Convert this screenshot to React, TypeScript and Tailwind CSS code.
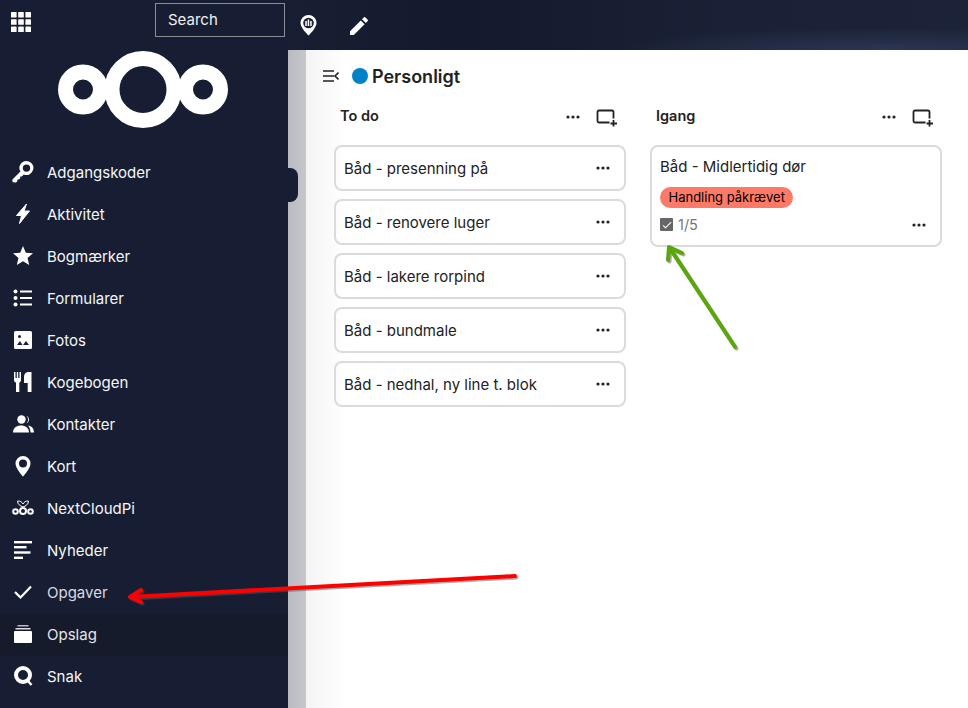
import React from "react";
import { MdStar, MdCheck } from "react-icons/md";

const Dots = () => (
  <svg width="14" height="4" viewBox="0 0 14 4" fill="#222">
    <circle cx="2" cy="2" r="1.6" /><circle cx="7" cy="2" r="1.6" /><circle cx="12" cy="2" r="1.6" />
  </svg>
);

const AddCard = () => (
  <svg width="22" height="18" viewBox="0 0 22 18" fill="none" stroke="#222" strokeWidth="1.8">
    <path d="M17.500 9.500V3a1.500 1.500 0 0 0-1.500-1.500H3A1.500 1.500 0 0 0 1.500 3v9A1.500 1.500 0 0 0 3 13.500h10.500" />
    <path d="M17.500 11v6.500M14.500 14.500h6.500" />
  </svg>
);

const Key = () => (
  <svg width="22" height="22" viewBox="0 0 22 22" fill="#fff">
    <path fillRule="evenodd" d="M14.500 0a7 7 0 1 1-2.700 13.500L9.800 15.500H8.200v1.700l-1.300 1.300H5.300v1.700L4 21.500l-3.300-.2-.5-2.600 8.200-8.100A7 7 0 0 1 14.500 0Zm0 3.400a3.700 3.700 0 1 0 0 7.400 3.700 3.700 0 0 0 0-7.400Z" />
  </svg>
);

const Bolt = () => (
  <svg width="16" height="22" viewBox="0 0 16 22" fill="#fff" stroke="#fff" strokeWidth="1" strokeLinejoin="round">
    <path d="M11.500 1 1.500 12.500h5L4.500 20.500 14.500 8h-5.500L11.500 1Z" />
  </svg>
);

const Bullets = () => (
  <svg width="20" height="18" viewBox="0 0 20 18" fill="#fff">
    <circle cx="2.500" cy="2.500" r="2" /><circle cx="2.500" cy="9" r="2" /><circle cx="2.500" cy="15.500" r="2" />
    <rect x="7" y="1.500" width="12" height="2" /><rect x="7" y="8" width="12" height="2" /><rect x="7" y="14.500" width="12" height="2" />
  </svg>
);

const Photo = () => (
  <svg width="18" height="18" viewBox="0 0 18 18">
    <rect width="18" height="18" rx="1.500" fill="#fff" />
    <circle cx="5.500" cy="5.500" r="1.500" fill="#171e33" />
    <path d="M3 14 6 10l2.500 4H3ZM9 14l3-4 3 4H9Z" fill="#171e33" />
  </svg>
);

const Cutlery = () => (
  <svg width="18" height="20" viewBox="0 0 18 20" fill="#fff">
    <path d="M0 0h1.500v6h1.300V0h1.400v6h1.300V0H7v8c0 1.300-.6 2.200-1.700 2.500V20H2V10.500C.7 10.200 0 9.300 0 8V0Z" />
    <path d="M10 5c0-3 1.500-4.700 4-5h3.500v20h-3.800v-9H10V5Z" />
  </svg>
);

const People = () => (
  <svg width="21" height="18" viewBox="0 0 21 18" fill="#fff">
    <circle cx="8.500" cy="4.500" r="4.200" />
    <path d="M0 17.500c0-4.500 3.500-7 8-7s8 2.500 8 7H0Z" />
    <path d="M13.500.7a4.200 4.200 0 0 1 0 7.700A6 6 0 0 0 13.500.7ZM15 10.500c3.500.4 6 2.700 6 7h-3.500c0-3-1-5.200-2.500-7Z" />
  </svg>
);

const Pin = () => (
  <svg width="16" height="21" viewBox="0 0 16 21" fill="#fff">
    <path fillRule="evenodd" d="M8 0a7.500 7.500 0 0 0-7.500 7.500C.5 12.500 8 20.500 8 20.500s7.500-8 7.500-13A7.500 7.500 0 0 0 8 0Zm0 3.500a4 4 0 1 1 0 8 4 4 0 0 1 0-8Z" />
  </svg>
);

const MapsPin = () => (
  <svg width="17" height="21" viewBox="0 0 17 21">
    <path d="M8.500 0A8 8 0 0 0 .5 8c0 5 8 12.500 8 12.500s8-7.500 8-12.500a8 8 0 0 0-8-8Z" fill="#fff" />
    <circle cx="8.500" cy="8" r="5.300" fill="#1a2136" />
    <rect x="5.300" y="6" width="1.500" height="5" fill="#fff" />
    <rect x="7.700" y="4.500" width="1.500" height="6.500" fill="#fff" />
    <rect x="10.200" y="6" width="1.500" height="5" fill="#fff" />
  </svg>
);

const Pencil = () => (
  <svg width="18" height="18" viewBox="0 0 18 18" fill="#fff">
    <path d="M0 18v-3.800L10.800 3.400l3.800 3.800L3.800 18H0ZM12 2.200 13.700.5a1.300 1.300 0 0 1 1.800 0l2 2a1.300 1.300 0 0 1 0 1.800L15.800 6 12 2.200Z" />
  </svg>
);

const Pi = () => (
  <svg width="22" height="16" viewBox="0 0 22 16" fill="none" stroke="#fff" strokeWidth="2">
    <circle cx="3.500" cy="11.500" r="2.300" /><circle cx="11" cy="11" r="3" /><circle cx="18.500" cy="11.500" r="2.300" />
    <path strokeWidth="1" d="M11 7C8 6 5.500 4 5.500 1.200 8 .5 10 2 11 4c1-2 3-3.500 5.500-2.800C16.500 4 14 6 11 7Z" />
  </svg>
);

const News = () => (
  <svg width="18" height="18" viewBox="0 0 18 18" fill="#fff">
    <rect x="0" y="0" width="18" height="2.400" /><rect x="0" y="5" width="12.500" height="2.400" />
    <rect x="0" y="10.300" width="16.500" height="2.400" /><rect x="0" y="15.600" width="9" height="2.400" />
  </svg>
);

const Check = () => (
  <svg width="18" height="14" viewBox="0 0 18 14" fill="none" stroke="#fff" strokeWidth="2.200">
    <path d="M1 7l5.500 5.500L17 1.500" />
  </svg>
);

const Stack = () => (
  <svg width="18" height="18" viewBox="0 0 18 18" fill="#fff">
    <rect x="3.500" y="0" width="11" height="1.500" opacity=".7" />
    <rect x="1.500" y="3" width="15" height="1.500" opacity=".85" />
    <path d="M0 7a1 1 0 0 1 1-1h16a1 1 0 0 1 1 1v10a1 1 0 0 1-1 1H1a1 1 0 0 1-1-1V7Z" />
  </svg>
);

const Talk = () => (
  <svg width="19" height="20" viewBox="0 0 19 20" fill="none" stroke="#fff" strokeWidth="4">
    <circle cx="9" cy="9" r="7" />
    <path d="M13.500 14.500 17.500 19" strokeWidth="2.500" />
  </svg>
);

const items: [React.ReactNode, string, string?][] = [
  [<Key />, "Adgangskoder"],
  [<Bolt />, "Aktivitet"],
  [<MdStar size={24} color="#fff" />, "Bogmærker"],
  [<Bullets />, "Formularer"],
  [<Photo />, "Fotos"],
  [<Cutlery />, "Kogebogen"],
  [<People />, "Kontakter"],
  [<Pin />, "Kort"],
  [<Pi />, "NextCloudPi"],
  [<News />, "Nyheder"],
  [<Check />, "Opgaver", "text-[#d9dae0]"],
  [<Stack />, "Opslag", "bg-[#151b2b] text-[#e4e5ea]"],
  [<Talk />, "Snak"],
];

const todo = [
  "Båd - presenning på",
  "Båd - renovere luger",
  "Båd - lakere rorpind",
  "Båd - bundmale",
  "Båd - nedhal, ny line t. blok",
];

const ColumnHead = ({ title }: { title: string }) => (
  <div className="flex h-[28px] items-center pl-[6px] pr-[8px]">
    <span className="flex-1 text-[14.5px] font-semibold text-[#222]">{title}</span>
    <span className="mr-[16px] flex translate-y-[1px]"><Dots /></span>
    <span className="flex translate-y-[2px]"><AddCard /></span>
  </div>
);

export default function App() {
  return (
    <div className="relative flex h-[708px] w-[968px] overflow-hidden bg-white font-['Inter',sans-serif]">
      <aside className="flex h-full w-[288px] shrink-0 flex-col bg-[#171e33] text-[#f6f6f8]">
        <div className="flex h-[51px] items-start">
          <div className="flex h-[44px] w-[43px] items-center justify-center pr-[2px]">
            <svg width="20" height="20" viewBox="0 0 20 20" fill="#fff">
              {[0, 7.2, 14.4].flatMap((y) =>
                [0, 7.2, 14.4].map((x) => <rect key={`${x}-${y}`} x={x} y={y} width="5.600" height="5.600" rx=".6" />)
              )}
            </svg>
          </div>
          <div className="ml-[112px] mt-[3px] flex h-[34px] w-[130px] items-center border border-[#8a8d92] pl-[12px] pt-[1px] text-[15px] text-[#f0f0f0]">
            Search
          </div>
        </div>
        <div className="flex h-[101px] items-start justify-center pr-[2px]">
          <svg width="170" height="77" viewBox="0 0 170 77" fill="none" stroke="#fff">
            <circle cx="85" cy="38.500" r="31" strokeWidth="15" />
            <circle cx="25" cy="38.500" r="17.500" strokeWidth="15" />
            <circle cx="145" cy="38.500" r="17.500" strokeWidth="15" />
          </svg>
        </div>
        <nav className="flex flex-col">
          {items.map(([icon, label, cls]) => (
            <div key={label} className={`flex h-[42px] items-center ${cls ?? ""}`}>
              <span className="flex w-[47px] shrink-0 -translate-y-[1px] items-center justify-center pr-[1px]">{icon}</span>
              <span className="text-[15px]">{label}</span>
            </div>
          ))}
        </nav>
      </aside>

      <div className="absolute left-[288px] top-[168px] h-[34px] w-[10px] rounded-r-[8px] bg-[#171e33]" />

      <div className="flex min-w-0 flex-1 flex-col">
        <header className="flex h-[50px] shrink-0 items-center bg-[radial-gradient(ellipse_at_88%_100%,#2c3552_0%,transparent_32%),linear-gradient(90deg,#181f33_0%,#141a2d_25%,#1a2136_65%,#1c2338_100%)] pl-[12px] pt-[1px]">
          <MapsPin />
          <span className="ml-[33px] flex"><Pencil /></span>
        </header>
        <div className="flex min-h-0 flex-1">
          <div className="w-[18px] shrink-0 bg-gradient-to-r from-[#b9bbc1] to-[#c6c7cb]" />
          <main className="min-w-0 flex-1 bg-gradient-to-r from-[#f4f4f4] via-white to-white bg-[length:80px_100%] bg-no-repeat pl-[17px]">
            <div className="flex h-[52px] items-center">
              <svg width="16" height="12" viewBox="0 0 16 12" fill="none" stroke="#222" strokeWidth="1.600">
                <path d="M0 1h11M0 6h11M0 11h11M15.500 2.500 12 6l3.500 3.500" />
              </svg>
              <span className="ml-[13px] h-[16px] w-[16px] rounded-full bg-[#0082c9]" />
              <span className="ml-[4px] pt-[1px] text-[18px] font-semibold text-[#222]">Personligt</span>
            </div>
            <div className="flex gap-[24px] pl-[11px]">
              <section className="w-[292px]">
                <ColumnHead title="To do" />
                <div className="mt-[15px] flex flex-col gap-[8px]">
                  {todo.map((t) => (
                    <div key={t} className="flex h-[46px] items-center justify-between rounded-[8px] border-2 border-[#dbdbdb] pl-[8px] pr-[14px] text-[15px] text-[#222]">
                      <span className="pt-[3px]">{t}</span>
                      <Dots />
                    </div>
                  ))}
                </div>
              </section>
              <section className="w-[292px]">
                <ColumnHead title="Igang" />
                <div className="mt-[15px] flex h-[102px] flex-col rounded-[8px] border-2 border-[#dbdbdb] pl-[8px] pr-[14px] pt-[11px]">
                  <div className="text-[15px] leading-[18px] text-[#222]">Båd - Midlertidig dør</div>
                  <div className="mt-[11px] w-fit rounded-full bg-[#ff7a66] px-[8.500px] text-[13px] leading-[21px] text-black">Handling påkrævet</div>
                  <div className="mt-[6px] flex items-center justify-between">
                    <div className="flex items-center gap-[5px] text-[14.5px] text-[#777]">
                      <span className="flex h-[13px] w-[13px] items-center justify-center rounded-[1px] bg-[#666]">
                        <MdCheck size={12} color="#fff" />
                      </span>
                      1/5
                    </div>
                    <Dots />
                  </div>
                </div>
              </section>
            </div>
          </main>
        </div>
      </div>

      {/* annotation arrows drawn over the screenshot */}
      <svg className="pointer-events-none absolute left-0 top-0" width="968" height="708" fill="none" strokeLinecap="round" strokeLinejoin="round">
        <g stroke="#555" strokeOpacity=".5" strokeWidth="4" transform="translate(1.500 1.500)">
          <path d="M515 576 130 597M141 590 130 597 141 602" />
          <path d="M735 347 669 247M668 260 669 247 682 253" />
        </g>
        <path d="M515 576 130 597M141 590 130 597 141 602" stroke="#ff0000" strokeWidth="4" />
        <path d="M735 347 669 247M668 260 669 247 682 253" stroke="#5aa70a" strokeWidth="4" />
      </svg>
    </div>
  );
}
